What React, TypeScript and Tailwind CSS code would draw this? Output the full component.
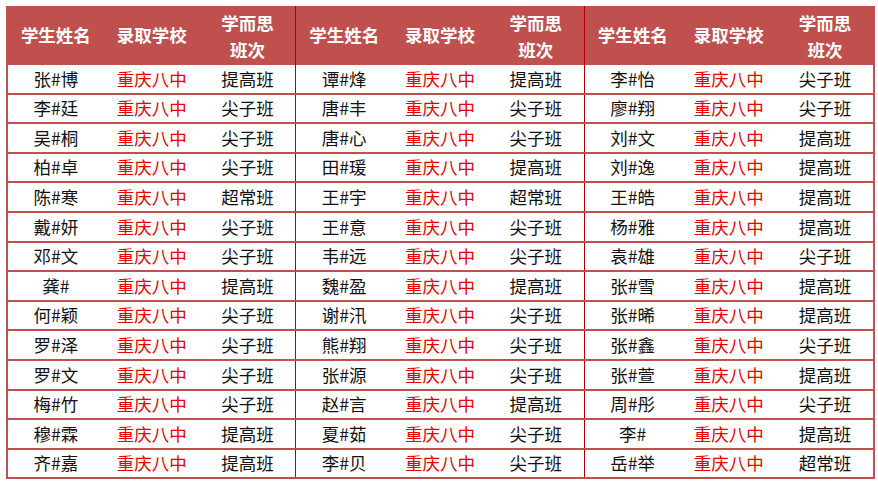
const sections: [string, string][][] = [
  [
    ['张#博', '提高班'],
    ['李#廷', '尖子班'],
    ['吴#桐', '尖子班'],
    ['柏#卓', '尖子班'],
    ['陈#寒', '超常班'],
    ['戴#妍', '尖子班'],
    ['邓#文', '尖子班'],
    ['龚#', '提高班'],
    ['何#颖', '尖子班'],
    ['罗#泽', '尖子班'],
    ['罗#文', '尖子班'],
    ['梅#竹', '尖子班'],
    ['穆#霖', '提高班'],
    ['齐#嘉', '提高班'],
  ],
  [
    ['谭#烽', '提高班'],
    ['唐#丰', '尖子班'],
    ['唐#心', '尖子班'],
    ['田#瑗', '提高班'],
    ['王#宇', '超常班'],
    ['王#意', '尖子班'],
    ['韦#远', '尖子班'],
    ['魏#盈', '提高班'],
    ['谢#汛', '尖子班'],
    ['熊#翔', '尖子班'],
    ['张#源', '尖子班'],
    ['赵#言', '提高班'],
    ['夏#茹', '尖子班'],
    ['李#贝', '尖子班'],
  ],
  [
    ['李#怡', '尖子班'],
    ['廖#翔', '尖子班'],
    ['刘#文', '提高班'],
    ['刘#逸', '提高班'],
    ['王#皓', '提高班'],
    ['杨#雅', '提高班'],
    ['袁#雄', '尖子班'],
    ['张#雪', '提高班'],
    ['张#晞', '提高班'],
    ['张#鑫', '尖子班'],
    ['张#萱', '提高班'],
    ['周#彤', '尖子班'],
    ['李#', '提高班'],
    ['岳#举', '超常班'],
  ],
];

const font = { fontFamily: '"Noto Sans CJK SC", "Liberation Sans", sans-serif' };

function HeaderGroup({ last }: { last?: boolean }) {
  return (
    <div className={`grid grid-cols-3 items-center h-full ${last ? '' : 'border-r border-[#b00000]'}`}>
      <div className="text-center">学生姓名</div>
      <div className="text-center">录取学校</div>
      <div className="text-center leading-[27px]">
        学而思
        <br />
        班次
      </div>
    </div>
  );
}

export default function App() {
  const rows = sections[0].map((_, i) => i);
  return (
    <div className="w-[878px] h-[488px] bg-white pt-[6px] pl-[6px]" style={font}>
      <div className="w-[869px] border-x-2 border-[#c0504d]">
        <div className="grid grid-cols-3 h-[59px] bg-[#c0504d] text-white font-bold text-[17.5px]">
          <HeaderGroup />
          <HeaderGroup />
          <HeaderGroup last />
        </div>
        {rows.map((i) => (
          <div key={i} className="grid grid-cols-3 h-[29.6px] border-b-2 border-[#c0504d] text-[17.5px]">
            {sections.map((sec, s) => (
              <div
                key={s}
                className={`grid grid-cols-3 items-center ${s < 2 ? 'border-r border-[#b00000]' : ''}`}
              >
                <div className="text-center text-[#111]">{sec[i][0]}</div>
                <div className="text-center text-[#e80000]">重庆八中</div>
                <div className="text-center text-[#111]">{sec[i][1]}</div>
              </div>
            ))}
          </div>
        ))}
      </div>
    </div>
  );
}
